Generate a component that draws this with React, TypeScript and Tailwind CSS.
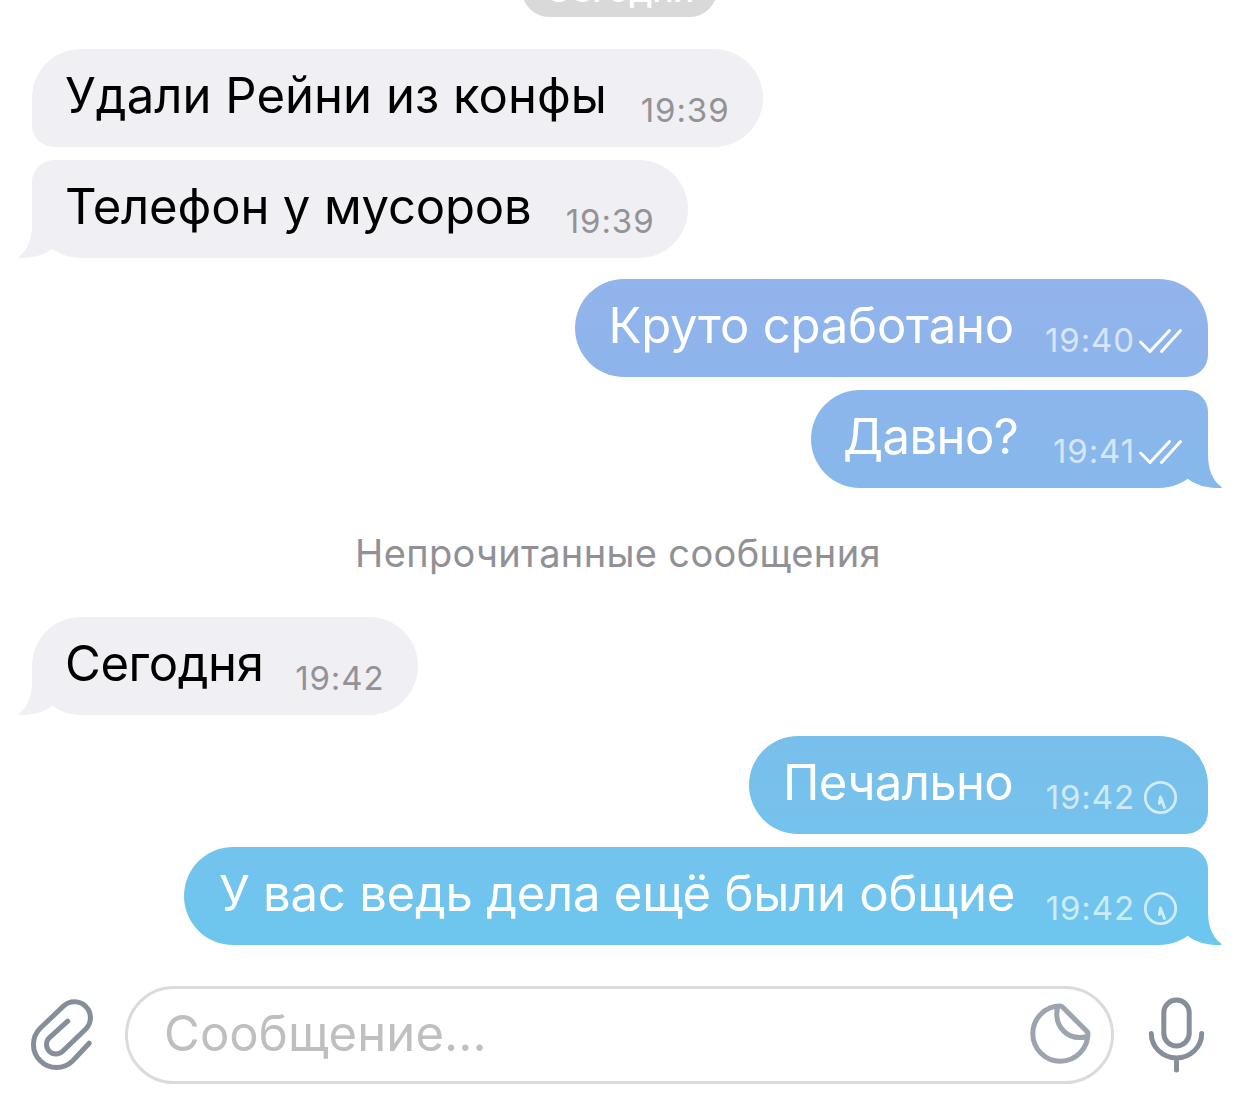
import React from 'react'
import clsx from 'clsx'

type Status = 'read' | 'pending'

interface MessageProps {
  text: string
  time: string
  className: string
  textClass?: string
  out?: boolean
  status?: Status
  tail?: string
}

const Checks = () => (
  <svg className="h-[99px] w-[45px]" viewBox="0 0 45 99" fill="none" stroke="#fff" strokeWidth="3" strokeLinecap="round" strokeLinejoin="round">
    <path d="M2.500 63 12 72.500 31.500 51.500M23.500 72.500 42.500 51.500" />
  </svg>
)

const Clock = () => (
  <svg className="h-[99px] w-[45px]" viewBox="0 0 45 99" fill="none" stroke="#fff" strokeOpacity=".68" strokeWidth="2.800" strokeLinecap="round" strokeLinejoin="round">
    <circle cx="22.5" cy="61.5" r="15.2" />
    <path d="M21.300 67.500 22.500 61 26.500 71.500M21.500 65.500H24" />
  </svg>
)

const Tail = ({ color, out }: { color: string; out?: boolean }) => (
  <svg
    className={clsx('absolute bottom-0 h-[60px] w-[60px]', out ? '-right-[15px] -scale-x-100' : '-left-[15px]')}
    viewBox="0 0 60 60"
    fill={color}
  >
    <path d="M15 8V26C15 42 10.500 52 2 58.500C.5 59.600 1.500 60 4 60C16 60 27 57.500 35.500 50.500L50 30Z" />
  </svg>
)

const Message = ({ text, time, className, textClass, out, status, tail }: MessageProps) => (
  <div
    className={clsx(
      'relative flex h-[98.5px] shrink-0 items-start justify-between whitespace-nowrap',
      out
        ? 'mr-[31.5px] self-end pl-[34px] pr-[24.5px] text-white'
        : 'ml-8 self-start bg-[#f0eff4] pl-[33px] pr-[33.5px] text-black',
      className
    )}
  >
    {tail && <Tail color={tail} out={out} />}
    <span className={clsx('relative mt-[1.5px] text-[49px] leading-[91px]', textClass)}>{text}</span>
    <div className="relative flex">
      <span className={clsx('mt-[41.5px] text-[33px] leading-[40px] tracking-[0.9px]', out ? 'text-white/65' : 'text-[#939297]')}>
        {time}
      </span>
      {status && <div className="ml-[3px]">{status === 'read' ? <Checks /> : <Clock />}</div>}
    </div>
  </div>
)

const Composer = () => (
  <footer className="mt-[40px] flex h-[99px] shrink-0 items-center">
    <svg className="h-[99px] w-[125px]" viewBox="0 15 125 99" fill="none" stroke="#858e99" strokeWidth="5" strokeLinecap="round">
      <path d="M67.700 51.200 49.300 67.800A9.500 9.500 0 0 0 62.700 81.300L86.300 58.500A16 16 0 0 0 63.700 35.900L40.200 58.200A23 23 0 0 0 72.800 90.800L89.200 73.200" />
    </svg>
    <div className="flex h-[98px] w-[989px] items-center justify-between rounded-full border-[3px] border-[#dbdbde] pl-[36px] pr-[18px]">
      <span className="pb-[3px] text-[49px] leading-none tracking-[0.1px] text-[#bfbfc1]">Сообщение...</span>
      <svg className="h-[66px] w-[66px]" viewBox="27 32 66 66" fill="none" stroke="#9ba4af" strokeWidth="5" strokeLinejoin="round">
        <path d="M60.300 36A27.600 27.600 0 1 0 88 63.500Q88 62.500 87 61.500L62.500 37Q61.500 36 60.300 36Z" />
        <path d="M57.500 37C53.500 57 68 71.500 87.500 66.500" />
      </svg>
    </div>
    <svg className="h-[99px] w-[125px]" viewBox="114 15 125 99" fill="none" stroke="#858e99" strokeWidth="5" strokeLinecap="round">
      <rect x="163.800" y="30" width="25.400" height="46" rx="12.700" />
      <path d="M151.300 63.500A25.200 24.500 0 0 0 201.700 63.500M176.500 88V100" />
    </svg>
  </footer>
)

const App = () => (
  <main className="flex h-[1101px] w-[1239px] flex-col overflow-hidden bg-white font-['Inter',sans-serif]">
    <div className="-mt-[37px] flex h-[54px] w-[195px] shrink-0 items-center justify-center self-center rounded-full bg-[#d9d9d9] pb-[3px] text-[36px] font-medium text-white">
      Сегодня
    </div>

    <Message text="Удали Рейни из конфы" time="19:39" className="mt-[31.5px] w-[731px] rounded-[49px] rounded-bl-[22px]" textClass="tracking-[0.05px]" />
    <Message text="Телефон у мусоров" time="19:39" className="mt-[12.5px] w-[656px] rounded-[49px] rounded-tl-[22px]" textClass="tracking-[-0.15px]" tail="#f0eff4" />

    <Message
      out
      text="Круто сработано"
      time="19:40"
      status="read"
      className="mt-[20.5px] w-[633px] rounded-[49px] rounded-br-[22px] bg-linear-to-b from-[#92b3eb] to-[#8db5eb]"
      textClass="tracking-[-0.2px]"
    />
    <Message
      out
      text="Давно?"
      time="19:41"
      status="read"
      className="mt-[12.5px] w-[396.5px] rounded-[49px] rounded-tr-[22px] bg-linear-to-b from-[#8cb6eb] to-[#87b8eb]"
      textClass="-ml-[2px] tracking-[-0.6px]"
      tail="#87b8eb"
    />

    <p className="mt-[40.5px] h-[48px] shrink-0 whitespace-nowrap pr-[3px] text-center text-[38px] leading-[49px] tracking-[0.35px] text-[#919096]">
      Непрочитанные сообщения
    </p>

    <Message text="Сегодня" time="19:42" className="mt-[40px] w-[386px] rounded-[49px]" textClass="tracking-[-0.4px]" tail="#f0eff4" />

    <Message
      out
      text="Печально"
      time="19:42"
      status="pending"
      className="mt-[20.5px] w-[458.5px] rounded-[49px] rounded-br-[22px] bg-linear-to-b from-[#7abfec] to-[#74c2ed]"
      textClass="tracking-[-0.65px]"
    />
    <Message
      out
      text="У вас ведь дела ещё были общие"
      time="19:42"
      status="pending"
      className="mt-[12.5px] w-[1023.5px] rounded-[49px] rounded-tr-[22px] bg-linear-to-b from-[#73c3ed] to-[#6dc6ee]"
      textClass="ml-[1px] tracking-[-0.23px]"
      tail="#6dc6ee"
    />

    <Composer />
  </main>
)

export default App
